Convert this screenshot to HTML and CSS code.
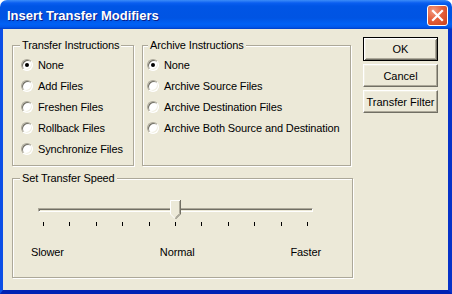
FILE: index.html
```html
<!DOCTYPE html>
<html lang="en">
<head>
    <meta charset="UTF-8">
    <title>Insert Transfer Modifiers</title>
    <link rel="stylesheet" href="styles.css">
</head>
<body>
    <div class="window">
        <div class="titlebar">
            <span class="title">Insert Transfer Modifiers</span>
            <button class="close" aria-label="Close">
                <svg width="13" height="13" viewBox="0 0 13 13">
                    <path d="M2 2 L11 11 M11 2 L2 11" stroke="#fff" stroke-width="2.2" stroke-linecap="square"/>
                </svg>
            </button>
        </div>
        <div class="client">
            <div class="main">
                <div class="top-row">
                    <div class="group transfer">
                        <span class="group-title">Transfer Instructions</span>
                        <div class="options">
                            <label class="option"><span class="radio checked"></span>None</label>
                            <label class="option"><span class="radio"></span>Add Files</label>
                            <label class="option"><span class="radio"></span>Freshen Files</label>
                            <label class="option"><span class="radio"></span>Rollback Files</label>
                            <label class="option"><span class="radio"></span>Synchronize Files</label>
                        </div>
                    </div>
                    <div class="group archive">
                        <span class="group-title">Archive Instructions</span>
                        <div class="options">
                            <label class="option"><span class="radio checked"></span>None</label>
                            <label class="option"><span class="radio"></span>Archive Source Files</label>
                            <label class="option"><span class="radio"></span>Archive Destination Files</label>
                            <label class="option"><span class="radio"></span>Archive Both Source and Destination</label>
                        </div>
                    </div>
                </div>
                <div class="group speed">
                    <span class="group-title">Set Transfer Speed</span>
                    <div class="slider">
                        <div class="track"></div>
                        <svg class="thumb" width="11" height="19" viewBox="0 0 11 19">
                            <polygon points="0,0 11,0 11,14 5.5,19 0,14" fill="#ece9d8"/>
                            <path d="M0.5 14 V0.5 H10" stroke="#fff" fill="none"/>
                            <path d="M0.5 14 L5 18.5" stroke="#fff" fill="none"/>
                            <path d="M10.5 0 V14 L5.5 19" stroke="#716f64" fill="none"/>
                            <path d="M9.5 1 V13.6 L5.5 17.6" stroke="#aca899" fill="none"/>
                        </svg>
                    </div>
                    <div class="ticks">
                        <span></span><span></span><span></span><span></span><span></span><span></span>
                        <span></span><span></span><span></span><span></span><span></span>
                    </div>
                    <div class="scale">
                        <span>Slower</span>
                        <span>Normal</span>
                        <span>Faster</span>
                    </div>
                </div>
            </div>
            <div class="buttons">
                <button class="btn default">OK</button>
                <button class="btn">Cancel</button>
                <button class="btn">Transfer Filter</button>
            </div>
        </div>
    </div>
</body>
</html>
```

FILE: styles.css
```css
:root {
    --face: #ece9d8;
    --light: #f1efe2;
    --shadow: #aca899;
    --dark: #716f64;
}

* {
    box-sizing: border-box;
}

body {
    margin: 0;
    background: #fff;
    font-family: "Liberation Sans", Arial, sans-serif;
    font-size: 11px;
    letter-spacing: -0.12px;
    color: #000;
}

.window {
    width: 452px;
    height: 294px;
    display: flex;
    flex-direction: column;
}

/* title bar */
.titlebar {
    height: 29px;
    display: flex;
    align-items: center;
    padding: 1px 4px 0 7px;
    border-radius: 7px 7px 0 0;
    background: linear-gradient(to bottom,
        #3c8cf8 0, #0a5ef0 3px, #0055e5 6px, #0054e3 18px,
        #0061f5 24px, #0058ec 27px, #003ec6 29px);
}

.title {
    flex: 1;
    color: #fff;
    font-weight: bold;
    font-size: 13px;
    letter-spacing: 0;
    line-height: 15px;
    text-shadow: 1px 1px #0a1e8a;
}

.close {
    width: 21px;
    height: 21px;
    padding: 0;
    margin-top: 1px;
    border: 1px solid #fff;
    border-radius: 3px;
    display: flex;
    align-items: center;
    justify-content: center;
    background: radial-gradient(circle at 30% 25%, #f29a80 0, #e5603b 45%, #c9401a 100%);
}

/* client area */
.client {
    flex: 1;
    display: flex;
    background: var(--face);
    border-style: solid;
    border-color: #0b4ee6 #0632c8 #0021b3 #0b4ee6;
    border-width: 0 4px 4px 3px;
    padding: 8px 0 0 9px;
    gap: 10px;
}

.main {
    margin-top: 8px;
    display: flex;
    flex-direction: column;
    gap: 12px;
}

.top-row {
    display: flex;
    gap: 8px;
}

.group {
    display: flex;
    flex-direction: column;
    align-items: flex-start;
    border: 1px solid var(--shadow);
    box-shadow: inset 1px 1px #fff, 1px 1px #fff;
}

.group-title {
    margin: -7px 0 0 7px;
    padding: 0 2px;
    line-height: 13px;
    background: var(--face);
}

.transfer {
    width: 122px;
    height: 121px;
}

.archive {
    width: 209px;
    height: 121px;
}

.archive .group-title {
    margin-left: 5px;
}

.speed {
    width: 341px;
    height: 100px;
}

.options {
    margin-top: 2px;
    display: flex;
    flex-direction: column;
    padding-left: 8px;
}

.archive .options {
    padding-left: 4px;
}

.option {
    height: 21px;
    display: flex;
    align-items: center;
    gap: 5px;
    white-space: nowrap;
}

.radio {
    width: 12px;
    height: 12px;
    border-radius: 50%;
    border: 1px solid;
    border-color: var(--shadow) #fff #fff var(--shadow);
    background: #fff;
    box-shadow: inset 1px 1px var(--dark), inset -1px -1px var(--light);
    display: flex;
    align-items: center;
    justify-content: center;
}

.radio.checked::after {
    content: "";
    width: 4px;
    height: 4px;
    border-radius: 50%;
    background: #000;
}

/* slider */
.slider {
    position: relative;
    width: 275px;
    height: 20px;
    margin: 15px 0 0 25px;
}

.track {
    margin-top: 8px;
    height: 4px;
    border: 1px solid;
    border-color: var(--shadow) #fff #fff var(--shadow);
    background: var(--face);
    box-shadow: inset 1px 1px var(--dark);
}

.thumb {
    position: absolute;
    left: 132px;
    top: 0;
}

.ticks {
    width: 265px;
    height: 4px;
    margin: 2px 0 0 30px;
    display: flex;
    justify-content: space-between;
}

.ticks span {
    width: 1px;
    background: #000;
}

.scale {
    width: 290px;
    margin: 20px 0 0 18px;
    display: flex;
    justify-content: space-between;
    line-height: 13px;
}

/* buttons */
.buttons {
    display: flex;
    flex-direction: column;
    gap: 3px;
}

.btn {
    width: 75px;
    height: 23px;
    padding: 0;
    font: inherit;
    color: #000;
    background: var(--face);
    border: 1px solid;
    border-color: #fff var(--dark) var(--dark) #fff;
    box-shadow: inset -1px -1px var(--shadow), inset 1px 1px var(--light);
}

.btn.default {
    height: 24px;
    border: 1px solid #000;
    box-shadow: inset 1px 1px #fff, inset -1px -1px var(--dark),
        inset 2px 2px var(--light), inset -2px -2px var(--shadow);
}
```
